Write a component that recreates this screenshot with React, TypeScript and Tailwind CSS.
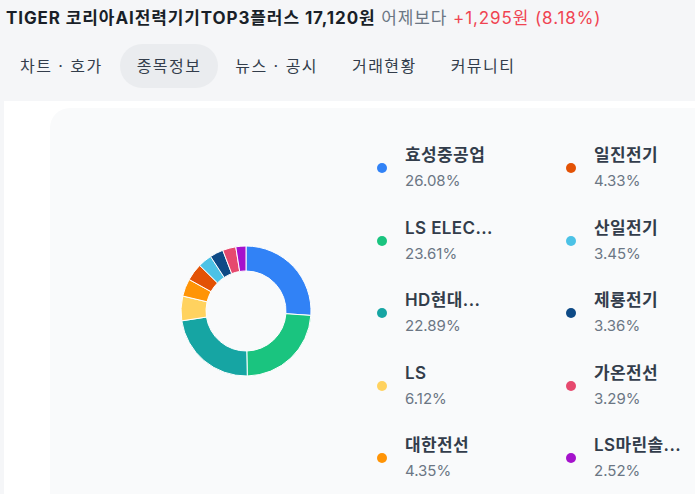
import React from 'react'

type Item = { name: string; pct: number; color: string }

const items: Item[] = [
  { name: '효성중공업', pct: 26.08, color: '#3182f6' },
  { name: 'LS ELEC...', pct: 23.61, color: '#1ac47f' },
  { name: 'HD현대...', pct: 22.89, color: '#16a5a3' },
  { name: 'LS', pct: 6.12, color: '#ffd25f' },
  { name: '대한전선', pct: 4.35, color: '#ff9406' },
  { name: '일진전기', pct: 4.33, color: '#e35205' },
  { name: '산일전기', pct: 3.45, color: '#4cc2e6' },
  { name: '제룡전기', pct: 3.36, color: '#0e4a86' },
  { name: '가온전선', pct: 3.29, color: '#e6496e' },
  { name: 'LS마린솔...', pct: 2.52, color: '#a512cc' },
]

const tabs = ['차트 · 호가', '종목정보', '뉴스 · 공시', '거래현황', '커뮤니티']

function arc(cx: number, cy: number, r: number, ri: number, a0: number, a1: number) {
  const p = (rad: number, a: number) => {
    const t = (a - 90) * (Math.PI / 180)
    return `${(cx + rad * Math.cos(t)).toFixed(3)} ${(cy + rad * Math.sin(t)).toFixed(3)}`
  }
  const large = a1 - a0 > 180 ? 1 : 0
  return `M ${p(r, a0)} A ${r} ${r} 0 ${large} 1 ${p(r, a1)} L ${p(ri, a1)} A ${ri} ${ri} 0 ${large} 0 ${p(ri, a0)} Z`
}

const Donut = () => {
  let start = 0
  return (
    <svg width="132" height="132" viewBox="0 0 132 132">
      {items.map((it) => {
        const a0 = start
        const a1 = start + (it.pct / 100) * 360
        start = a1
        return (
          <path
            key={it.name}
            d={arc(66, 66, 65, 40, a0, a1)}
            fill={it.color}
            stroke="#ffffff"
            strokeWidth="1"
          />
        )
      })}
    </svg>
  )
}

const Legend = ({ it }: { it: Item }) => (
  <div className="flex items-center h-12">
    <span className="w-[10px] h-[10px] rounded-full shrink-0" style={{ backgroundColor: it.color }} />
    <div className="ml-[18px] flex flex-col gap-1">
      <span className="text-[17px] leading-[22px] font-semibold tracking-[0.4px] text-[#333d4b]">{it.name}</span>
      <span className="text-[15px] leading-[22px] text-[#6b7684]">{it.pct.toFixed(2)}%</span>
    </div>
  </div>
)

export default function App() {
  const left = items.slice(0, 5)
  const right = items.slice(5)
  return (
    <div
      className="w-[695px] h-[494px] overflow-hidden bg-[#f5f6f8]"
      style={{ fontFamily: 'Inter, "Noto Sans CJK KR", sans-serif' }}
    >
      <div className="px-[6px] pt-[7px] text-[17px] leading-[22px] whitespace-nowrap tracking-[0.9px]">
        <span className="font-bold text-[#191f28]">TIGER 코리아AI전력기기TOP3플러스 17,120원</span>
        <span className="text-[#6b7684]"> 어제보다 </span>
        <span className="text-[#f04452]">+1,295원 (8.18%)</span>
      </div>
      <div className="flex items-center mt-[15px] pl-[3px]">
        {tabs.map((t, i) => (
          <div
            key={t}
            className={
              'h-[44px] px-[17px] flex items-center rounded-full text-[16px] tracking-[1.45px] text-[#333d4b] ' +
              (i === 1 ? 'bg-[#eaecef]' : '')
            }
          >
            {t}
          </div>
        ))}
      </div>
      <div className="mt-[13px] ml-[4px] h-[400px] bg-white pt-[7px] pl-[46px]">
        <div className="h-full bg-[#f9fafb] rounded-tl-[20px] flex items-start pt-[36px]">
          <div className="ml-[130px] mt-[101px]">
            <Donut />
          </div>
          <div className="ml-[65px] flex">
            <div className="w-[189px] flex flex-col gap-[24.5px]">
              {left.map((it) => (
                <Legend key={it.name} it={it} />
              ))}
            </div>
            <div className="flex flex-col gap-[24.5px]">
              {right.map((it) => (
                <Legend key={it.name} it={it} />
              ))}
            </div>
          </div>
        </div>
      </div>
    </div>
  )
}
